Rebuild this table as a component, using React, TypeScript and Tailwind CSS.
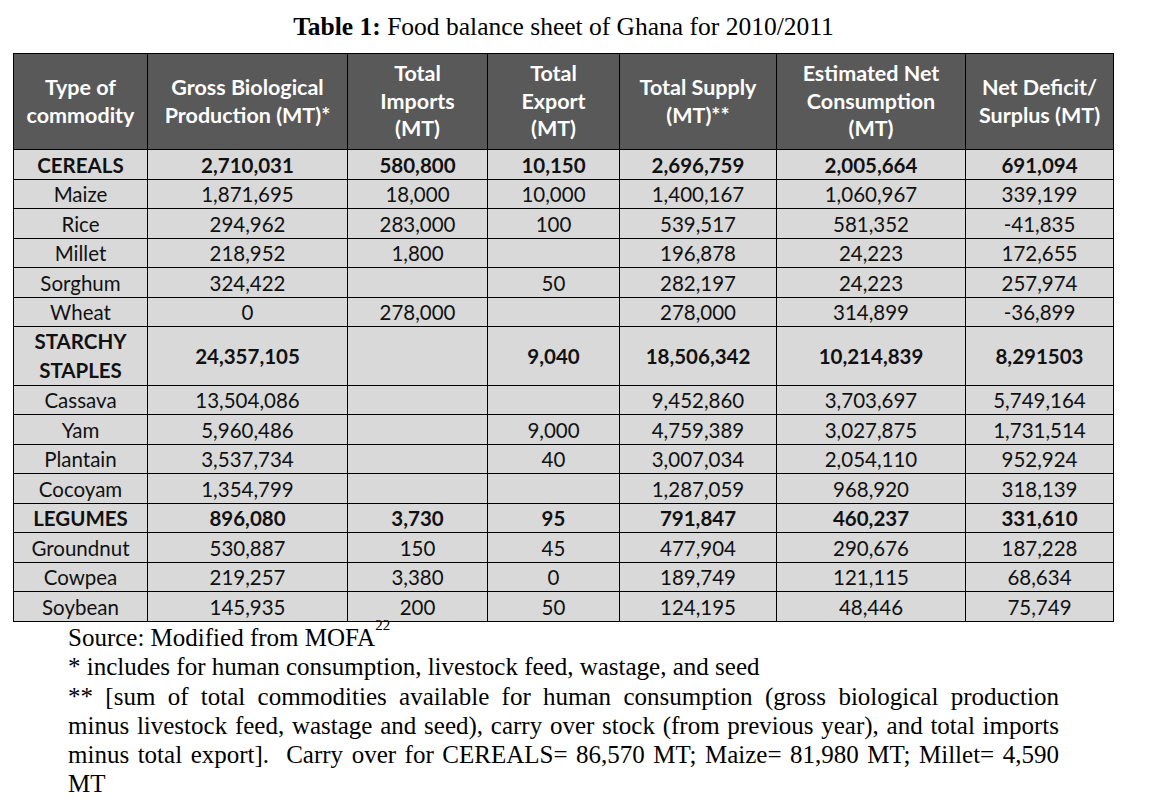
import React from "react";

type Row = {
  name: string;
  cells: string[];
  bold?: boolean;
  tall?: boolean;
};

const rows: Row[] = [
  { name: "CEREALS", cells: ["2,710,031", "580,800", "10,150", "2,696,759", "2,005,664", "691,094"], bold: true },
  { name: "Maize", cells: ["1,871,695", "18,000", "10,000", "1,400,167", "1,060,967", "339,199"] },
  { name: "Rice", cells: ["294,962", "283,000", "100", "539,517", "581,352", "-41,835"] },
  { name: "Millet", cells: ["218,952", "1,800", "", "196,878", "24,223", "172,655"] },
  { name: "Sorghum", cells: ["324,422", "", "50", "282,197", "24,223", "257,974"] },
  { name: "Wheat", cells: ["0", "278,000", "", "278,000", "314,899", "-36,899"] },
  { name: "STARCHY STAPLES", cells: ["24,357,105", "", "9,040", "18,506,342", "10,214,839", "8,291503"], bold: true, tall: true },
  { name: "Cassava", cells: ["13,504,086", "", "", "9,452,860", "3,703,697", "5,749,164"] },
  { name: "Yam", cells: ["5,960,486", "", "9,000", "4,759,389", "3,027,875", "1,731,514"] },
  { name: "Plantain", cells: ["3,537,734", "", "40", "3,007,034", "2,054,110", "952,924"] },
  { name: "Cocoyam", cells: ["1,354,799", "", "", "1,287,059", "968,920", "318,139"] },
  { name: "LEGUMES", cells: ["896,080", "3,730", "95", "791,847", "460,237", "331,610"], bold: true },
  { name: "Groundnut", cells: ["530,887", "150", "45", "477,904", "290,676", "187,228"] },
  { name: "Cowpea", cells: ["219,257", "3,380", "0", "189,749", "121,115", "68,634"] },
  { name: "Soybean", cells: ["145,935", "200", "50", "124,195", "48,446", "75,749"] },
];

const headers: React.ReactNode[] = [
  <>Type of<br />commodity</>,
  <>Gross Biological<br />Production (MT)*</>,
  <>Total<br />Imports<br />(MT)</>,
  <>Total<br />Export<br />(MT)</>,
  <>Total Supply<br />(MT)**</>,
  <>Estimated Net<br />Consumption<br />(MT)</>,
  <>Net Deficit/<br />Surplus (MT)</>,
];

const widths = ["w-[134px]", "w-[200px]", "w-[140px]", "w-[132px]", "w-[157px]", "w-[189px]", "w-[148px]"];

// rows are ~29.5px in the scan, so alternate 30/29 to keep the total right
function rowHeight(r: Row, i: number) {
  if (r.tall) return "h-[59px]";
  return i % 2 === 0 ? "h-[30px]" : "h-[29px]";
}

export default function App() {
  return (
    <div className="w-[1153px] h-[806px] bg-white text-black">
      <h1 className="pt-[13px] w-[1101px] ml-[13px] text-center text-[25.5px] leading-[28px] font-['Liberation_Serif',serif] font-normal">
        <span className="font-bold">Table 1:</span> Food balance sheet of Ghana for 2010/2011
      </h1>

      <table className="mt-[12px] ml-[13px] w-[1101px] table-fixed border-collapse font-['Lato',sans-serif] text-[20.5px] text-[#111]">
        <colgroup>
          {widths.map((w, i) => (
            <col key={i} className={w} />
          ))}
        </colgroup>
        <thead>
          <tr className="h-[96px] bg-[#595959]">
            {headers.map((h, i) => (
              <th
                key={i}
                className="border border-black text-white text-[21.5px] font-bold text-center align-middle leading-[27.5px] p-0"
              >
                {h}
              </th>
            ))}
          </tr>
        </thead>
        <tbody className="bg-[#d9d9d9]">
          {rows.map((r, idx) => (
            <tr key={r.name} className={rowHeight(r, idx)}>
              <td
                className={`border border-black text-center align-middle leading-[22px] p-0 ${
                  r.bold ? "font-bold" : ""
                }`}
              >
                {r.tall ? (
                  <span className="block leading-[29px]">
                    STARCHY
                    <br />
                    STAPLES
                  </span>
                ) : (
                  r.name
                )}
              </td>
              {r.cells.map((c, i) => (
                <td
                  key={i}
                  className={`border border-black text-center align-middle leading-[22px] p-0 ${
                    r.bold ? "font-bold" : ""
                  }`}
                >
                  {c}
                </td>
              ))}
            </tr>
          ))}
        </tbody>
      </table>

      <div className="ml-[68px] w-[991px] font-['Liberation_Serif',serif] text-[25px] leading-[29.3px] mt-[1px]">
        <p>
          Source: Modified from MOFA<sup className="text-[15px] align-[9px] leading-none">22</sup>
        </p>
        <p>* includes for human consumption, livestock feed, wastage, and seed</p>
        {/* the scan breaks the ** note at fixed words, so each line is justified on its own */}
        <p className="text-justify [text-align-last:justify]">
          ** [sum of total commodities available for human consumption (gross biological production
        </p>
        <p className="text-justify [text-align-last:justify]">
          minus livestock feed, wastage and seed), carry over stock (from previous year), and total imports
        </p>
        <p className="text-justify [text-align-last:justify]">
          minus total export]. &nbsp;Carry over for CEREALS= 86,570 MT; Maize= 81,980 MT; Millet= 4,590
        </p>
        <p>MT</p>
      </div>
    </div>
  );
}
